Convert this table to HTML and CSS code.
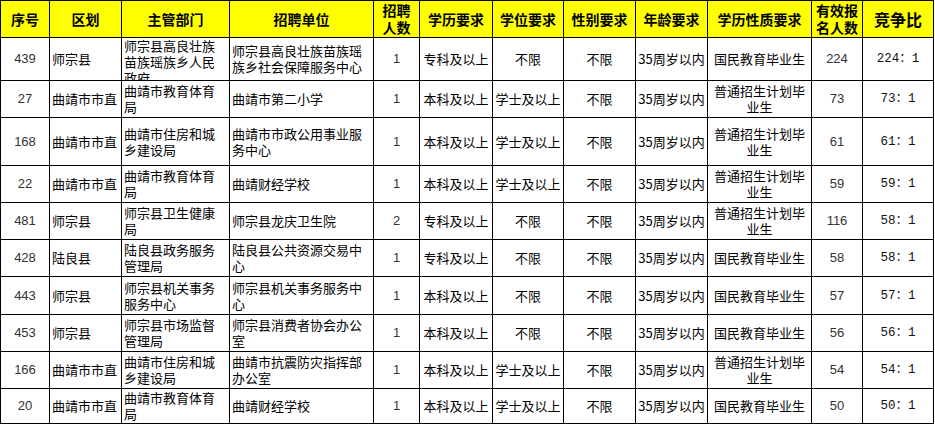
FILE: index.html
```html
<!DOCTYPE html>
<html lang="zh-CN">
<head>
<meta charset="utf-8">
<title>招聘竞争比</title>
<link rel="stylesheet" href="styles.css">
</head>
<body>
<table class="sheet">
  <colgroup>
    <col class="w49"><col class="w72"><col class="w108"><col class="w144"><col class="w46"><col class="w73"><col class="w71"><col class="w72"><col class="w72"><col class="w104"><col class="w51"><col class="w71">
  </colgroup>
  <thead>
    <tr class="h37">
      <th>序号</th><th>区划</th><th>主管部门</th><th>招聘单位</th><th>招聘<br>人数</th><th>学历要求</th><th>学位要求</th><th>性别要求</th><th>年龄要求</th><th>学历性质要求</th><th>有效报<br>名人数</th><th class="big">竞争比</th>
    </tr>
  </thead>
  <tbody>
    <tr class="h43">
      <td class="num">439</td><td class="l">师宗县</td><td class="l"><div class="clip">师宗县高良壮族苗族瑶族乡人民政府</div></td><td class="l">师宗县高良壮族苗族瑶族乡社会保障服务中心</td><td class="num">1</td><td class="c">专科及以上</td><td class="c">不限</td><td class="c">不限</td><td class="age">35周岁以内</td><td class="c">国民教育毕业生</td><td class="num">224</td><td class="ratio">224：1</td>
    </tr>
    <tr class="h37">
      <td class="num">27</td><td class="l">曲靖市市直</td><td class="l">曲靖市教育体育局</td><td class="l">曲靖市第二小学</td><td class="num">1</td><td class="c">本科及以上</td><td class="c">学士及以上</td><td class="c">不限</td><td class="age">35周岁以内</td><td class="c">普通招生计划毕业生</td><td class="num">73</td><td class="ratio">73：1</td>
    </tr>
    <tr class="h48">
      <td class="num">168</td><td class="l">曲靖市市直</td><td class="l">曲靖市住房和城乡建设局</td><td class="l">曲靖市市政公用事业服务中心</td><td class="num">1</td><td class="c">本科及以上</td><td class="c">学士及以上</td><td class="c">不限</td><td class="age">35周岁以内</td><td class="c">普通招生计划毕业生</td><td class="num">61</td><td class="ratio">61：1</td>
    </tr>
    <tr class="h37">
      <td class="num">22</td><td class="l">曲靖市市直</td><td class="l">曲靖市教育体育局</td><td class="l">曲靖财经学校</td><td class="num">1</td><td class="c">本科及以上</td><td class="c">学士及以上</td><td class="c">不限</td><td class="age">35周岁以内</td><td class="c">普通招生计划毕业生</td><td class="num">59</td><td class="ratio">59：1</td>
    </tr>
    <tr class="h37">
      <td class="num">481</td><td class="l">师宗县</td><td class="l">师宗县卫生健康局</td><td class="l">师宗县龙庆卫生院</td><td class="num">2</td><td class="c">专科及以上</td><td class="c">不限</td><td class="c">不限</td><td class="age">35周岁以内</td><td class="c">普通招生计划毕业生</td><td class="num">116</td><td class="ratio">58：1</td>
    </tr>
    <tr class="h37">
      <td class="num">428</td><td class="l">陆良县</td><td class="l">陆良县政务服务管理局</td><td class="l">陆良县公共资源交易中心</td><td class="num">1</td><td class="c">专科及以上</td><td class="c">不限</td><td class="c">不限</td><td class="age">35周岁以内</td><td class="c">国民教育毕业生</td><td class="num">58</td><td class="ratio">58：1</td>
    </tr>
    <tr class="h38">
      <td class="num">443</td><td class="l">师宗县</td><td class="l">师宗县机关事务服务中心</td><td class="l">师宗县机关事务服务中心</td><td class="num">1</td><td class="c">本科及以上</td><td class="c">不限</td><td class="c">不限</td><td class="age">35周岁以内</td><td class="c">国民教育毕业生</td><td class="num">57</td><td class="ratio">57：1</td>
    </tr>
    <tr class="h37">
      <td class="num">453</td><td class="l">师宗县</td><td class="l">师宗县市场监督管理局</td><td class="l">师宗县消费者协会办公室</td><td class="num">1</td><td class="c">本科及以上</td><td class="c">不限</td><td class="c">不限</td><td class="age">35周岁以内</td><td class="c">国民教育毕业生</td><td class="num">56</td><td class="ratio">56：1</td>
    </tr>
    <tr class="h37">
      <td class="num">166</td><td class="l">曲靖市市直</td><td class="l">曲靖市住房和城乡建设局</td><td class="l">曲靖市抗震防灾指挥部办公室</td><td class="num">1</td><td class="c">本科及以上</td><td class="c">学士及以上</td><td class="c">不限</td><td class="age">35周岁以内</td><td class="c">普通招生计划毕业生</td><td class="num">54</td><td class="ratio">54：1</td>
    </tr>
    <tr class="h35">
      <td class="num">20</td><td class="l">曲靖市市直</td><td class="l">曲靖市教育体育局</td><td class="l">曲靖财经学校</td><td class="num">1</td><td class="c">本科及以上</td><td class="c">学士及以上</td><td class="c">不限</td><td class="age">35周岁以内</td><td class="c">国民教育毕业生</td><td class="num">50</td><td class="ratio">50：1</td>
    </tr>
  </tbody>
</table>
</body>
</html>
```

FILE: styles.css
```css
html, body {
  margin: 0;
  padding: 0;
  background: #ffffff;
}

.sheet {
  border-collapse: collapse;
  table-layout: fixed;
  width: 934px;
  font-family: "Noto Sans CJK SC", "Noto Sans", sans-serif;
  font-size: 13px;
  line-height: 16px;
  color: #000;
}

.w49 { width: 49px; }
.w72 { width: 72px; }
.w108 { width: 108px; }
.w144 { width: 144px; }
.w46 { width: 46px; }
.w73 { width: 73px; }
.w71 { width: 71px; }
.w104 { width: 104px; }
.w51 { width: 51px; }

.h35 { height: 35px; }
.h37 { height: 37px; }
.h38 { height: 38px; }
.h43 { height: 43px; }
.h48 { height: 48px; }

.sheet th,
.sheet td {
  border: 1px solid #000;
  padding: 0 2px;
  vertical-align: middle;
  overflow: hidden;
  word-break: break-all;
}

.sheet th {
  background: #ffff00;
  font-weight: bold;
  font-size: 14px;
  line-height: 17px;
  text-align: center;
  padding: 0;
}

.sheet th.big {
  font-size: 16px;
}

.l { text-align: left; }
.c { text-align: center; }

.num {
  text-align: center;
  font-family: "Liberation Sans", Arial, sans-serif;
  font-size: 13px;
  color: #333;
}

.age {
  text-align: center;
  white-space: nowrap;
  padding: 0 1px;
}

.sheet td.age { padding: 0 1px; }

.ratio {
  text-align: center;
  font-family: "Liberation Mono", "Noto Sans CJK SC", monospace;
  font-size: 12.5px;
  color: #111;
}

.clip {
  max-height: 42px;
  overflow: hidden;
}
```
